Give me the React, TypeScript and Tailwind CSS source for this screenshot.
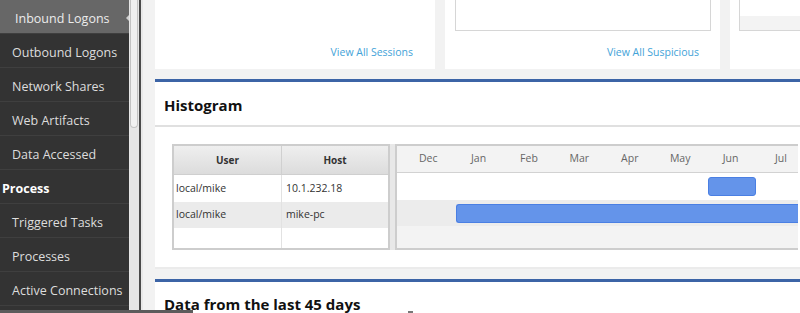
const navItems = [
  { label: "Inbound Logons", selected: true },
  { label: "Outbound Logons" },
  { label: "Network Shares" },
  { label: "Web Artifacts" },
  { label: "Data Accessed" },
  { label: "Process", header: true },
  { label: "Triggered Tasks" },
  { label: "Processes" },
  { label: "Active Connections" },
];

const months = ["Dec", "Jan", "Feb", "Mar", "Apr", "May", "Jun", "Jul"];

function Sidebar() {
  return (
    <aside className="w-[129px] shrink-0 bg-[#333333]">
      {navItems.map((item) => (
        <div
          key={item.label}
          className={
            "relative flex h-[34px] items-center border-b border-[#3f3f3f] pt-[5px] " +
            (item.selected ? "bg-[#676767] pl-[15px] text-[#ececec]" : item.header ? "pl-[2px] font-bold text-white" : "pl-[12px] text-[#dddddd]")
          }
        >
          <span className="text-[12.5px] whitespace-nowrap">{item.label}</span>
          {item.selected && (
            <span className="absolute right-0 top-[15px] h-0 w-0 border-y-[3px] border-r-[3px] border-y-transparent border-r-[#cfcfcf]" />
          )}
        </div>
      ))}
    </aside>
  );
}

function Scrollbar() {
  return (
    <div className="flex shrink-0">
      <div className="w-[10px] bg-[#e6e6e6] px-[1px]">
        <div className="h-[128px] rounded-b-[4px] border border-t-0 border-[#c4c4c4] bg-[#f1f1f1]" />
      </div>
      <div className="w-[2px] bg-[#4a4a4a]" />
    </div>
  );
}

function TopCards() {
  return (
    <div className="flex h-[69px] gap-[10px]">
      <div className="flex w-[280px] shrink-0 items-end justify-end bg-white pb-[8px] pr-[22px]">
        <span className="text-[10.5px] text-[#43a3d8]">View All Sessions</span>
      </div>
      <div className="flex w-[275px] shrink-0 flex-col bg-white px-[10px] pr-[9px]">
        <div className="h-[31px] border border-t-0 border-[#d6d6d6] bg-white" />
        <div className="flex flex-1 items-end justify-end pb-[8px] pr-[12px]">
          <span className="text-[10.5px] text-[#43a3d8]">View All Suspicious</span>
        </div>
      </div>
      <div className="w-[280px] shrink-0 bg-white pl-[9px]">
        <div className="flex h-[31px] flex-col border border-t-0 border-[#d6d6d6]">
          <div className="h-[16px] bg-white" />
          <div className="flex-1 bg-[#f3f3f3]" />
        </div>
      </div>
    </div>
  );
}

function UserTable() {
  const rows = [
    ["local/mike", "10.1.232.18"],
    ["local/mike", "mike-pc"],
    ["", ""],
  ];
  return (
    <div className="w-[218px] border-2 border-[#cdcdcd] text-[10.5px] text-[#333]">
      <div className="flex h-[29px] border-b border-[#cfcfcf] bg-gradient-to-b from-[#efefef] to-[#dcdcdc] font-bold text-[10px]">
        <div className="flex w-[108px] items-center justify-center border-r border-[#d0d0d0]">User</div>
        <div className="flex flex-1 items-center justify-center">Host</div>
      </div>
      {rows.map((r, i) => (
        <div
          key={i}
          className={"flex " + (i === 0 ? "h-[27px] bg-white" : i === 1 ? "h-[26px] bg-[#ebebeb]" : "h-[20px] bg-white")}
        >
          <div className="flex w-[108px] items-center border-r border-[#e2e2e2] pl-[2px]">{r[0]}</div>
          <div className="flex flex-1 items-center pl-[4px]">{r[1]}</div>
        </div>
      ))}
    </div>
  );
}

function Timeline() {
  return (
    <div className="flex w-[403px] flex-col border-2 border-r-0 border-[#cdcdcd] text-[10.5px]">
      <div className="flex h-[27px] items-center border-b border-[#d2d2d2] bg-[#f3f3f3] pl-[6px] text-[#666]">
        {months.map((m) => (
          <div key={m} className="w-[50.4px] shrink-0 text-center">
            {m}
          </div>
        ))}
      </div>
      <div className="flex h-[27px] items-center bg-white">
        <div className="ml-[311px] h-[19px] w-[48px] rounded-[3px] border border-[#4a7fe3] bg-[#6494ea]" />
      </div>
      <div className="flex h-[26px] items-center bg-[#ececec]">
        <div className="ml-[59px] h-[19px] flex-1 rounded-l-[3px] border border-r-0 border-[#4a7fe3] bg-[#6494ea]" />
      </div>
      <div className="flex-1 bg-[#f3f3f3]" />
    </div>
  );
}

function Histogram() {
  return (
    <section className="mt-[10px] w-[700px] border-t-[3px] border-[#3c64a6] bg-white">
      <div className="flex h-[45px] items-center border-b-2 border-[#e0e0e0] pl-[9px] pt-[3px]">
        <h2 className="text-[15px] font-bold text-[#111]">Histogram</h2>
      </div>
      <div className="flex h-[140px] pl-[17px] pt-[17px]">
        <div className="flex h-[106px]">
          <UserTable />
          <div className="w-[5px] bg-[#e8e8e8]" />
          <Timeline />
        </div>
      </div>
      <div className="h-[2px] bg-[#ebebeb]" />
    </section>
  );
}

export default function App() {
  return (
    <div className="relative flex h-[313px] w-[800px] overflow-hidden bg-[#f2f2f2] font-['Open_Sans',sans-serif]">
      <Sidebar />
      <Scrollbar />
      <main className="min-w-0 flex-1 overflow-hidden border-l-2 border-[#e8e8e8] pl-[12px]">
        <TopCards />
        <Histogram />
        <section className="mt-[10px] w-[700px] border-t-[3px] border-[#3c64a6] bg-white">
          <div className="flex h-[44px] items-center pl-[9px]">
            <h2 className="text-[15px] font-bold text-[#111]">Data from the last 45 days</h2>
          </div>
        </section>
      </main>
      <div className="absolute bottom-0 left-0 h-[3px] w-[193px] bg-[#5c5c5c]" />
      <div className="absolute bottom-0 left-[408px] h-[2px] w-[5px] bg-[#777]" />
    </div>
  );
}
